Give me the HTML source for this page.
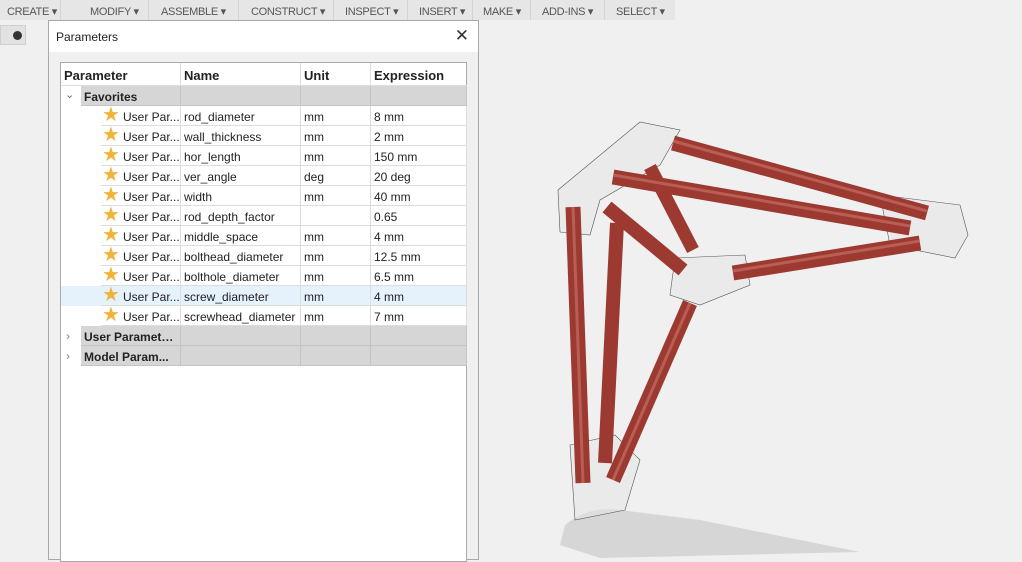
<!DOCTYPE html>
<html><head><meta charset="utf-8"><style>
*{margin:0;padding:0;box-sizing:border-box}
body{width:1022px;height:558px;overflow:hidden;background:#f0f0f0;font-family:"Liberation Sans",sans-serif;position:relative}
.tb{position:absolute;left:0;top:0;width:675px;height:20px;background:#e6e6e6;font-size:11px;color:#555}
.tb span{position:absolute;top:5px;letter-spacing:-0.3px}
.tb i{position:absolute;top:0;width:1px;height:20px;background:#d4d4d4}
.btn{position:absolute;left:0;top:25px;width:26px;height:20px;background:#e2e2e2;border:1px solid #d0d0d0}
.dlg{position:absolute;left:48px;top:20px;width:431px;height:540px;background:#f0f0f0;border:1px solid #a8a8a8}
.title{height:31px;background:#fff;font-size:12px;padding:9px 0 0 7px;color:#222}
.x{position:absolute;right:9px;top:5px;font-size:17px;color:#333}
.tbl{position:absolute;left:11px;top:41px;width:407px;height:500px;background:#fff;border:1px solid #aaa}
.r{position:absolute;left:0;height:20px;font-size:12px;color:#222}
.c{position:absolute;top:0;height:20px;padding:4px 0 0 3px;border-right:1px solid #ddd;border-bottom:1px solid #ddd;white-space:nowrap;overflow:hidden}
.g .c{background:#d6d6d6;border-color:#c4c4c4;font-weight:bold}
.star{position:absolute;left:42px;top:0px;color:#f2b33a;font-size:20px;line-height:19px}
</style></head><body>
<div class="tb">
<span style="left:7px">CREATE ▾</span><i style="left:60px"></i>
<span style="left:90px">MODIFY ▾</span><i style="left:148px"></i>
<span style="left:161px">ASSEMBLE ▾</span><i style="left:238px"></i>
<span style="left:251px">CONSTRUCT ▾</span><i style="left:333px"></i>
<span style="left:345px">INSPECT ▾</span><i style="left:407px"></i>
<span style="left:419px">INSERT ▾</span><i style="left:472px"></i>
<span style="left:483px">MAKE ▾</span><i style="left:530px"></i>
<span style="left:542px">ADD-INS ▾</span><i style="left:604px"></i>
<span style="left:616px">SELECT ▾</span>
</div>
<div class="btn"><div style="position:absolute;left:12px;top:5px;width:9px;height:9px;border-radius:50%;background:#333"></div></div>
<svg style="position:absolute;left:0;top:0" width="1022" height="558">
<path d="M565 525 Q590 505 620 510 L700 520 L860 552 L600 558 L560 545 Z" fill="#d6d6d6"/>
<g stroke="#555" stroke-width="0.6" fill="rgba(230,230,230,0.55)">
<path d="M558 190 L640 122 L680 130 L660 165 L600 200 L590 235 L560 232 Z"/>
<path d="M880 195 L960 205 L968 235 L955 258 L890 245 Z"/>
<path d="M675 258 L745 255 L750 285 L700 305 L670 295 Z"/>
<path d="M570 445 L615 435 L640 460 L625 510 L575 520 Z"/>
</g>
<g stroke-linecap="butt" stroke="#9c3a32">
<line x1="573" y1="207" x2="583" y2="483" stroke-width="15"/>
<line x1="617" y1="223" x2="605" y2="463" stroke-width="14"/>
<line x1="613" y1="480" x2="690" y2="303" stroke-width="15"/>
<line x1="607" y1="207" x2="683" y2="270" stroke-width="14"/>
<line x1="650" y1="167" x2="693" y2="250" stroke-width="13"/>
<line x1="673" y1="143" x2="927" y2="213" stroke-width="15"/>
<line x1="613" y1="177" x2="910" y2="228" stroke-width="15"/>
<line x1="733" y1="273" x2="920" y2="243" stroke-width="15"/>
</g>
<g stroke="#d88078" stroke-width="3" opacity=".5">
<line x1="573" y1="207" x2="583" y2="483"/><line x1="613" y1="480" x2="690" y2="303"/>
<line x1="673" y1="141" x2="927" y2="211"/><line x1="613" y1="175" x2="910" y2="226"/><line x1="733" y1="271" x2="920" y2="241"/>
</g>
</svg>
<div class="dlg">
<div class="title">Parameters</div><div class="x">✕</div>
<div class="tbl">
<div class="r" style="top:0;font-weight:bold;font-size:13px"><div class="c" style="left:0;width:120px;height:23px;padding-top:5px">Parameter</div><div class="c" style="left:120px;width:120px;height:23px;padding-top:5px">Name</div><div class="c" style="left:240px;width:70px;height:23px;padding-top:5px">Unit</div><div class="c" style="left:310px;width:96px;height:23px;padding-top:5px;border-right:0">Expression</div></div>
<div class="r g" style="top:23px;width:406px"><span style="position:absolute;left:4px;top:2px;color:#666;font-size:11px">⌄</span><div class="c" style="left:20px;width:100px">Favorites</div><div class="c" style="left:120px;width:120px"></div><div class="c" style="left:240px;width:70px"></div><div class="c" style="left:310px;width:96px"></div></div>
<div class="r g" style="top:263px;width:406px"><span style="position:absolute;left:5px;top:3px;color:#888">›</span><div class="c" style="left:20px;width:100px">User Paramet…</div><div class="c" style="left:120px;width:120px"></div><div class="c" style="left:240px;width:70px"></div><div class="c" style="left:310px;width:96px"></div></div>
<div class="r g" style="top:283px;width:406px"><span style="position:absolute;left:5px;top:3px;color:#888">›</span><div class="c" style="left:20px;width:100px">Model Param...</div><div class="c" style="left:120px;width:120px"></div><div class="c" style="left:240px;width:70px"></div><div class="c" style="left:310px;width:96px"></div></div>
<div class="r" style="top:43px"><div class="c" style="left:40px;width:80px;padding-left:22px"><span class="star" style="left:1px">★</span>User Par...</div><div class="c" style="left:120px;width:120px">rod_diameter</div><div class="c" style="left:240px;width:70px">mm</div><div class="c" style="left:310px;width:96px">8 mm</div></div>
<div class="r" style="top:63px"><div class="c" style="left:40px;width:80px;padding-left:22px"><span class="star" style="left:1px">★</span>User Par...</div><div class="c" style="left:120px;width:120px">wall_thickness</div><div class="c" style="left:240px;width:70px">mm</div><div class="c" style="left:310px;width:96px">2 mm</div></div>
<div class="r" style="top:83px"><div class="c" style="left:40px;width:80px;padding-left:22px"><span class="star" style="left:1px">★</span>User Par...</div><div class="c" style="left:120px;width:120px">hor_length</div><div class="c" style="left:240px;width:70px">mm</div><div class="c" style="left:310px;width:96px">150 mm</div></div>
<div class="r" style="top:103px"><div class="c" style="left:40px;width:80px;padding-left:22px"><span class="star" style="left:1px">★</span>User Par...</div><div class="c" style="left:120px;width:120px">ver_angle</div><div class="c" style="left:240px;width:70px">deg</div><div class="c" style="left:310px;width:96px">20 deg</div></div>
<div class="r" style="top:123px"><div class="c" style="left:40px;width:80px;padding-left:22px"><span class="star" style="left:1px">★</span>User Par...</div><div class="c" style="left:120px;width:120px">width</div><div class="c" style="left:240px;width:70px">mm</div><div class="c" style="left:310px;width:96px">40 mm</div></div>
<div class="r" style="top:143px"><div class="c" style="left:40px;width:80px;padding-left:22px"><span class="star" style="left:1px">★</span>User Par...</div><div class="c" style="left:120px;width:120px">rod_depth_factor</div><div class="c" style="left:240px;width:70px"></div><div class="c" style="left:310px;width:96px">0.65</div></div>
<div class="r" style="top:163px"><div class="c" style="left:40px;width:80px;padding-left:22px"><span class="star" style="left:1px">★</span>User Par...</div><div class="c" style="left:120px;width:120px">middle_space</div><div class="c" style="left:240px;width:70px">mm</div><div class="c" style="left:310px;width:96px">4 mm</div></div>
<div class="r" style="top:183px"><div class="c" style="left:40px;width:80px;padding-left:22px"><span class="star" style="left:1px">★</span>User Par...</div><div class="c" style="left:120px;width:120px">bolthead_diameter</div><div class="c" style="left:240px;width:70px">mm</div><div class="c" style="left:310px;width:96px">12.5 mm</div></div>
<div class="r" style="top:203px"><div class="c" style="left:40px;width:80px;padding-left:22px"><span class="star" style="left:1px">★</span>User Par...</div><div class="c" style="left:120px;width:120px">bolthole_diameter</div><div class="c" style="left:240px;width:70px">mm</div><div class="c" style="left:310px;width:96px">6.5 mm</div></div>
<div class="r" style="top:223px;background:#e5f1fb;width:406px"><div class="c" style="left:40px;width:80px;padding-left:22px"><span class="star" style="left:1px">★</span>User Par...</div><div class="c" style="left:120px;width:120px">screw_diameter</div><div class="c" style="left:240px;width:70px">mm</div><div class="c" style="left:310px;width:96px">4 mm</div></div>
<div class="r" style="top:243px"><div class="c" style="left:40px;width:80px;padding-left:22px"><span class="star" style="left:1px">★</span>User Par...</div><div class="c" style="left:120px;width:120px">screwhead_diameter</div><div class="c" style="left:240px;width:70px">mm</div><div class="c" style="left:310px;width:96px">7 mm</div></div>
</div>
</div>
</body></html>
